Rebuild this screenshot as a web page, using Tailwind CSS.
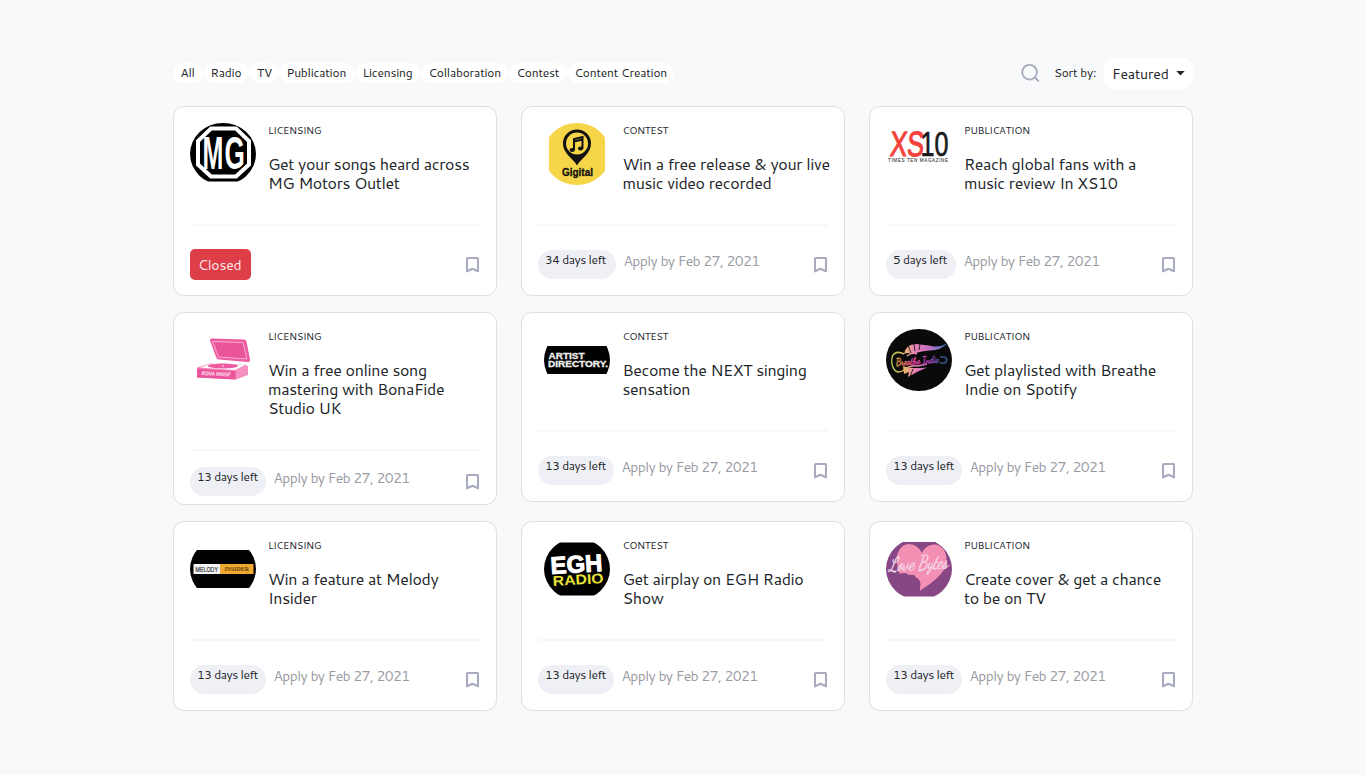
<!DOCTYPE html>
<html lang="en">
<head>
<meta charset="utf-8">
<title>Opportunities</title>
<script src="https://cdn.jsdelivr.net/npm/@tailwindcss/browser@4"></script>
</head>
<body class="h-[775px] overflow-hidden bg-[#f9f9f9] font-[Cantarell,'Noto_Sans_Display','Noto_Sans',sans-serif] text-[#212529]">
<main class="mx-auto w-[1044px] pt-[49px]">
  <nav class="flex h-[48px] items-center justify-between bg-[#f8f9fb] px-3">
    <div class="flex text-[12px] leading-[20px] tracking-[-0.2px] whitespace-nowrap">
      <span class="w-[30px] rounded-full bg-white pl-[7.5px]">All</span>
      <span class="w-[46px] rounded-full bg-white pl-[7.5px]">Radio</span>
      <span class="w-[30px] rounded-full bg-white pl-2">TV</span>
      <span class="w-[76px] rounded-full bg-white pl-[7.5px]">Publication</span>
      <span class="w-[66px] rounded-full bg-white pl-[7.5px]">Licensing</span>
      <span class="w-[88px] rounded-full bg-white pl-[7.5px]">Collaboration</span>
      <span class="w-[58px] rounded-full bg-white pl-[7.5px]">Contest</span>
      <span class="w-[107px] rounded-full bg-white pl-[7.5px]">Content Creation</span>
    </div>
    <div class="flex items-center">
      <svg class="mr-[14px] size-[20px]" viewBox="0 0 24 24" fill="none" stroke="#a8aabc" stroke-width="2.2" stroke-linecap="round"><circle cx="11.500" cy="11" r="8.800"/><path d="M17.900 17.400 22 21.500"/></svg>
      <span class="w-[50px] text-[12px] tracking-[-0.25px] whitespace-nowrap">Sort by:</span>
      <button class="flex h-[31px] w-[89px] items-center rounded-[10px] bg-white pl-2 text-[14px] tracking-[-0.15px]">
        <span class="w-[63.5px] pt-[2px] text-left">Featured</span>
        <svg class="h-[5px] w-[9px]" viewBox="0 0 9 5"><path d="M.3 0h8.400L4.500 4.400z" fill="#212529"/></svg>
      </button>
    </div>
  </nav>
  <section id="cards" class="mt-[9px] grid grid-cols-3 items-start gap-x-6 gap-y-4 px-3"></section>
</main>
<script>
const logos = {
mg: `<clipPath id="mg"><path d="M0 0H66V58.500H0z"/></clipPath><g clip-path="url(#mg)"><ellipse cx="33" cy="31" rx="33" ry="31" fill="#000"/><path d="M21 5.500H46L59 18V41.500L46 53.500H21L8 41.500V18z" fill="#000" stroke="#fff" stroke-width="4"/><g font-family="Liberation Sans" font-weight="700" font-size="46" fill="#fff"><text transform="translate(12.500 46) scale(.55 1)" textLength="38" lengthAdjust="spacingAndGlyphs">M</text><text transform="translate(34.500 46) scale(.55 1)" textLength="37" lengthAdjust="spacingAndGlyphs">G</text></g></g>`,
gig: `<clipPath id="gg"><path d="M5 0H61V62H5z"/></clipPath><g clip-path="url(#gg)"><ellipse cx="33" cy="31" rx="33" ry="31" fill="#f6d548"/><path d="M33 42.500C29 35 19 31 19 20.500A14 14 0 0 1 47 20.500C47 31 37 35 33 42.500z" fill="#111"/><circle cx="33" cy="20.500" r="11" fill="#f6d548"/><path d="M30 27V16L38.500 14V25.500M30 18.500l8.500-2" fill="none" stroke="#111" stroke-width="2"/><ellipse cx="28.200" cy="27" rx="2.600" ry="2.100" fill="#111"/><ellipse cx="36.500" cy="25.500" rx="2.600" ry="2.100" fill="#111"/><text x="18" y="53" font-family="Liberation Sans" font-weight="700" font-size="10.500" fill="#111" stroke="#111" stroke-width=".3" textLength="31" lengthAdjust="spacingAndGlyphs">Gigital</text></g>`,
xs: `<g font-family="Liberation Sans"><text transform="translate(3.500 33) skewX(-4) scale(.72 1)" font-size="35" fill="#f4423d" stroke="#f4423d" stroke-width="1.200" textLength="47" lengthAdjust="spacingAndGlyphs">XS</text><text transform="translate(34.500 33) scale(.8 1)" font-size="35" fill="#1a1a1a" stroke="#1a1a1a" stroke-width=".7" textLength="35" lengthAdjust="spacingAndGlyphs">10</text><text x="2" y="38.500" font-size="4.500" fill="#444" stroke="#444" stroke-width=".1" textLength="60">TIMES TEN MAGAZINE</text></g>`,
bona: `<path d="M22 9.500 54 10.500Q56 10.500 56.500 12.500L60 31Q60 33.500 57.500 33L29 30.500Q27 30.500 26 28L20 11.500Q19.500 9.500 22 9.500z" fill="#ee5a9f"/><path d="M22.500 12.500 53 13.500 57 30 28.500 28z" fill="#e9549a" stroke="#ffc4de" stroke-width=".8"/><path d="M7 38.500 22 34 57 36 58 38V46L46 50.500 7 48.500z" fill="#f590bf"/><path d="M7 39.500 45.500 42 45.500 50.500 7 48.500z" fill="#e9549a"/><path d="M10 38.500 24 34 55 36 45 41z" fill="#fff"/><ellipse cx="33" cy="37" rx="15" ry="2.400" fill="#ee5a9f"/><circle cx="33" cy="37" r=".8" fill="#fff"/><text transform="translate(11.500 46) rotate(3)" font-family="Liberation Sans" font-size="5.500" font-style="italic" font-weight="700" fill="#ffe3f0" textLength="29" lengthAdjust="spacingAndGlyphs">BONA MINGF</text>`,
artist: `<clipPath id="ar"><path d="M0 17H66V45H0z"/></clipPath><ellipse cx="33" cy="31" rx="33" ry="31" clip-path="url(#ar)"/><g font-family="Liberation Sans" font-weight="700" fill="#eee" stroke="#eee" stroke-width=".3" font-size="8.300"><text x="4.500" y="30.300" textLength="36" lengthAdjust="spacingAndGlyphs">ARTIST</text><text x="4" y="37.500" textLength="60" lengthAdjust="spacingAndGlyphs">DIRECTORY.</text></g>`,
breathe: `<defs><linearGradient id="bg" gradientUnits="userSpaceOnUse" x1="5" x2="60" y1="0" y2="0"><stop offset="0" stop-color="#a8b84a"/><stop offset=".22" stop-color="#e9bf60"/><stop offset=".42" stop-color="#e983b3"/><stop offset=".7" stop-color="#c470c0"/><stop offset="1" stop-color="#3f71b8"/></linearGradient><linearGradient id="bt"><stop offset="0" stop-color="#e0a030"/><stop offset=".4" stop-color="#e0409a"/><stop offset=".75" stop-color="#b040b0"/><stop offset="1" stop-color="#3f50a8"/></linearGradient></defs><ellipse cx="33" cy="31" rx="33" ry="31" fill="#0a0a0a"/><path d="M18 25Q20 15 30 15L43 16.500Q53 19 61 14.500Q56 21 44 21.500Q34 22 27 25Q22 23 18 25zM17 37Q25 40 41 38.500Q32 42 22 48L23 43 18 45z" fill="url(#bg)"/><path d="M22 16l3 8M28 15l1 7M34 15l-1 6M24 48l3-8" stroke="#0a0a0a" stroke-width=".8"/><path d="M18 25Q10 21 6.500 27Q4 34 8.500 41Q12 45 18 41Q24 36 32 37L41 35M21 27Q26 23 31 25" fill="none" stroke="url(#bg)" stroke-width="1.500"/><text transform="translate(10 36.500) rotate(-4)" font-family="Dancing Script, Liberation Serif" font-weight="700" font-size="10.500" fill="url(#bt)" stroke="url(#bt)" stroke-width=".4" textLength="43" lengthAdjust="spacingAndGlyphs">Breathe Indie</text><path d="M54 28h5l2 3-2 3h-5" fill="none" stroke="#34568b" stroke-width="1.500"/>`,
melody: `<clipPath id="me"><path d="M0 12H66V50H0z"/></clipPath><ellipse cx="33" cy="31" rx="33" ry="31" clip-path="url(#me)"/><path d="M3.500 26H30V36H3.500z" fill="#f4f4f4"/><path d="M30 26H63.500V36H30z" fill="#efa92f"/><text x="5.500" y="33.500" font-family="Liberation Sans" font-size="7.200" fill="#333" stroke="#333" stroke-width=".2" textLength="22.500" lengthAdjust="spacingAndGlyphs">MELODY</text><text x="34.500" y="33.300" font-family="Liberation Serif" font-weight="700" font-size="7" fill="#5b3c0c" textLength="24.500" lengthAdjust="spacingAndGlyphs">INSIDER</text>`,
egh: `<clipPath id="eg"><path d="M0 4.500H66V57.500H0z"/></clipPath><ellipse cx="33" cy="31" rx="33" ry="31" clip-path="url(#eg)"/><g font-family="Liberation Sans" font-weight="700"><text transform="translate(7 36) rotate(-3.500)" font-size="24" fill="#fff" stroke="#fff" stroke-width="1" textLength="52" lengthAdjust="spacingAndGlyphs">EGH</text><text transform="translate(9 48) rotate(-3.500)" font-size="14" fill="#e8e337" textLength="51" lengthAdjust="spacingAndGlyphs">RADIO</text></g>`,
love: `<clipPath id="lo"><path d="M0 4H66V58.500H0z"/></clipPath><g clip-path="url(#lo)"><ellipse cx="33" cy="31" rx="33" ry="31" fill="#874684"/><path d="M34 53C37 50 56 40 60 27C63 14 55 6 48 6.500C41 7 37 12 36 15C33 9 28 6 22 6C14 7 10 16 11 23Q11 31 14 36Q19 33.500 23 37Q29 36 29.500 39Q36 42 34 49z" fill="#f28fb3"/><text transform="translate(3 33) rotate(-3)" font-family="Dancing Script, Liberation Serif" font-style="italic" font-size="20" fill="#f6dcec" stroke="#f6dcec" stroke-width=".3" textLength="59" lengthAdjust="spacingAndGlyphs">Love Bytes</text></g>`
};
const L='LICENSING', C='CONTEST', P='PUBLICATION';
const cards = [
  [L,'Get your songs heard across<br>MG Motors Outlet','mg',''],
  [C,'Win a free release &amp; your live<br>music video recorded','gig','34 days left',78],
  [P,'Reach global fans with a<br>music review In XS10','xs','5 days left',70],
  [L,'Win a free online song<br>mastering with BonaFide<br>Studio UK','bona','13 days left',76],
  [C,'Become the NEXT singing<br>sensation','artist','13 days left',76],
  [P,'Get playlisted with Breathe<br>Indie on Spotify','breathe','13 days left',76],
  [L,'Win a feature at Melody<br>Insider','melody','13 days left',76],
  [C,'Get airplay on EGH Radio<br>Show','egh','13 days left',76],
  [P,'Create cover &amp; get a chance<br>to be on TV','love','13 days left',76]
];
document.getElementById('cards').innerHTML = cards.map(([tag,title,logo,left,w]) => {
  const tall = title.split('<br>').length > 2;
  return `<article class="flex flex-col rounded-[11px] border border-[#dedfe0] bg-white px-4 pt-4 ${tall ? 'h-[193px]' : 'h-[190px]'}">
    <div class="flex ${tall ? 'h-[120px]' : 'h-[101px]'}">
      <svg class="h-[62px] w-[66px] shrink-0 ${tag===C ? 'ml-1.5 mr-[12.5px]' : 'mr-3'}" viewBox="0 0 66 62">${logos[logo]}</svg>
      <div class="whitespace-nowrap">
        <div class="h-[31px] text-[10px] leading-[15px] tracking-[-0.38px]">${tag}</div>
        <h2 class="text-[16px] leading-[19.2px] tracking-[-0.36px]">${title}</h2>
      </div>
    </div>
    <div class="h-[2px] bg-[#f8f8f8]"></div>
    <div class="flex ${tall ? 'mt-4' : left ? 'mt-6' : 'mt-[23px]'}">
      ${left
        ? `<span class="h-[29px] shrink-0 rounded-full bg-[#eff0f5] pl-[7px] text-[12px] leading-[20px] tracking-[-0.45px] whitespace-nowrap" style="width:${w}px">${left}</span><span class="ml-[7.5px] text-[14px] leading-[23px] tracking-[-0.6px] whitespace-nowrap text-[#999aa3]">Apply by Feb 27, 2021</span>`
        : `<span class="h-[31px] w-[61px] rounded-[5px] bg-[#de3e48] pl-2 text-[14px] leading-[32px] tracking-[-0.2px] text-[#fbe6e8]">Closed</span>`}
      <svg class="mr-px ml-auto h-[16px] w-[13px] ${left ? 'mt-[7px]' : 'mt-2'}" viewBox="0 0 13 16"><path d="M1 14.300V2a1 1 0 0 1 1-1h9a1 1 0 0 1 1 1v12.300L6.500 11.700z" fill="none" stroke="#a8aabf" stroke-width="2.100" stroke-linejoin="round"/></svg>
    </div>
  </article>`;
}).join('');
</script>
</body>
</html>
